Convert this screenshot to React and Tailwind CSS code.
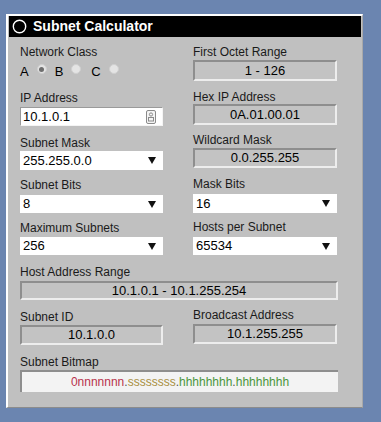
const font = "font-['Liberation_Sans',Arial,sans-serif]";

function Label({ children, mt }) {
  return (
    <div className={`${mt} h-[14px] text-[12px] leading-[14px] text-[#1a1a1a] whitespace-nowrap`}>
      {children}
    </div>
  );
}

function ReadOnly({ value, mt, h = "h-[21px]" }) {
  return (
    <div
      className={`${mt} ${h} flex items-center justify-center border-2 border-t-[#8e8e8e] border-l-[#8e8e8e] border-r-[#ededed] border-b-[#ededed] bg-[#c3c3c3] text-[13px] text-black`}
    >
      {value}
    </div>
  );
}

function Select({ value, mt, h = "h-[19px]" }) {
  return (
    <div className={`${mt} ${h} flex items-center justify-between bg-white pl-[3px] pr-[7px] text-[13px] text-black`}>
      <span>{value}</span>
      <svg width="8" height="7" viewBox="0 0 8 7">
        <path d="M0 0 H8 L4 7 Z" fill="#111" />
      </svg>
    </div>
  );
}

function Radio({ checked }) {
  return (
    <span className="mt-[1px] flex h-[10px] w-[10px] items-center justify-center rounded-full border border-[#cfcfcf] bg-[#e4e4e4]">
      {checked && <span className="h-[5px] w-[5px] rounded-full bg-[#6e6e6e]" />}
    </span>
  );
}

export default function App() {
  return (
    <div className={`${font} h-[422px] w-[381px] overflow-hidden bg-[#6b85b0] pl-[6px] pt-[14px]`}>
      <div className="flex h-[394px] w-[357px] flex-col border-b border-l-2 border-r border-t-2 border-b-[#8c8c8c] border-l-white border-r-[#a9a9a9] border-t-white bg-[#c0c0c0] pl-[1px] pr-[1px]">
        {/* title bar */}
        <div className="flex h-[21px] items-center bg-black pl-[3px]">
          <svg width="15" height="15" viewBox="0 0 15 15">
            <circle cx="7.5" cy="7.5" r="6.2" fill="none" stroke="white" strokeWidth="1.4" />
          </svg>
          <span className="ml-[6px] text-[14px] font-bold leading-[21px] text-white">Subnet Calculator</span>
        </div>

        <div className="flex flex-col pl-[11px]">
          <div className="flex gap-[30px]">
            {/* left column */}
            <div className="flex w-[143px] flex-col">
              <Label mt="mt-[8px]">Network Class</Label>
              <div className="mt-[4px] flex h-[17px] items-start text-[13px] leading-[17px] text-black">
                <span>A</span>
                <span className="ml-[8px]"><Radio checked /></span>
                <span className="ml-[8px]">B</span>
                <span className="ml-[8px]"><Radio /></span>
                <span className="ml-[10px]">C</span>
                <span className="ml-[8px]"><Radio /></span>
              </div>
              <Label mt="mt-[11px]">IP Address</Label>
              <div className="mt-[2px] flex h-[19px] items-center justify-between border border-b-[#f4f4f4] border-l-[#9a9a9a] border-r-[#f4f4f4] border-t-[#9a9a9a] bg-white pl-[2px] pr-[6px] text-[13px] text-black">
                <span>10.1.0.1</span>
                <svg width="10" height="14" viewBox="0 0 10 14">
                  <rect x="0.5" y="0.5" width="9" height="13" rx="1.5" fill="#f4f4f4" stroke="#8a8a8a" />
                  <circle cx="5" cy="4.5" r="1.6" fill="none" stroke="#8a8a8a" />
                  <rect x="2.5" y="7.5" width="5" height="3.5" fill="none" stroke="#8a8a8a" />
                </svg>
              </div>
              <Label mt="mt-[10px]">Subnet Mask</Label>
              <Select mt="mt-[1px]" value="255.255.0.0" />
              <Label mt="mt-[8px]">Subnet Bits</Label>
              <Select mt="mt-[3px]" h="h-[18px]" value="8" />
              <Label mt="mt-[8px]">Maximum Subnets</Label>
              <Select mt="mt-[2px]" h="h-[18px]" value="256" />
            </div>

            {/* right column */}
            <div className="flex w-[144px] flex-col">
              <Label mt="mt-[8px]">First Octet Range</Label>
              <ReadOnly mt="mt-[1px]" value="1 - 126" />
              <Label mt="mt-[9px]">Hex IP Address</Label>
              <ReadOnly mt="mt-0" value="0A.01.00.01" />
              <Label mt="mt-[8px]">Wildcard Mask</Label>
              <ReadOnly mt="mt-[1px]" h="h-[20px]" value="0.0.255.255" />
              <Label mt="mt-[9px]">Mask Bits</Label>
              <Select mt="mt-[3px]" value="16" />
              <Label mt="mt-[7px]">Hosts per Subnet</Label>
              <Select mt="mt-[3px]" h="h-[18px]" value="65534" />
            </div>
          </div>

          <div className="flex w-[318px] flex-col">
            <Label mt="mt-[10px]">Host Address Range</Label>
            <ReadOnly mt="mt-[2px]" h="h-[19px]" value="10.1.0.1 - 10.1.255.254" />
          </div>

          <div className="flex gap-[30px]">
            <div className="flex w-[143px] flex-col">
              <Label mt="mt-[10px]">Subnet ID</Label>
              <ReadOnly mt="mt-[1px]" h="h-[20px]" value="10.1.0.0" />
            </div>
            <div className="flex w-[144px] flex-col">
              <Label mt="mt-[8px]">Broadcast Address</Label>
              <ReadOnly mt="mt-[2px]" h="h-[20px]" value="10.1.255.255" />
            </div>
          </div>

          <div className="flex w-[318px] flex-col">
            <Label mt="mt-[10px]">Subnet Bitmap</Label>
            <div className="mt-[1px] flex h-[22px] items-center justify-center border-l-2 border-t-2 border-l-[#8e8e8e] border-t-[#8e8e8e] bg-[#f3f3f3] text-[12px]">
              <span className="text-[#b8324c]">0nnnnnnn</span>
              <span className="text-[#555]">.</span>
              <span className="text-[#a98f3e]">ssssssss</span>
              <span className="text-[#555]">.</span>
              <span className="text-[#4b963c]">hhhhhhhh</span>
              <span className="text-[#555]">.</span>
              <span className="text-[#4b963c]">hhhhhhhh</span>
            </div>
          </div>
        </div>
      </div>
    </div>
  );
}
